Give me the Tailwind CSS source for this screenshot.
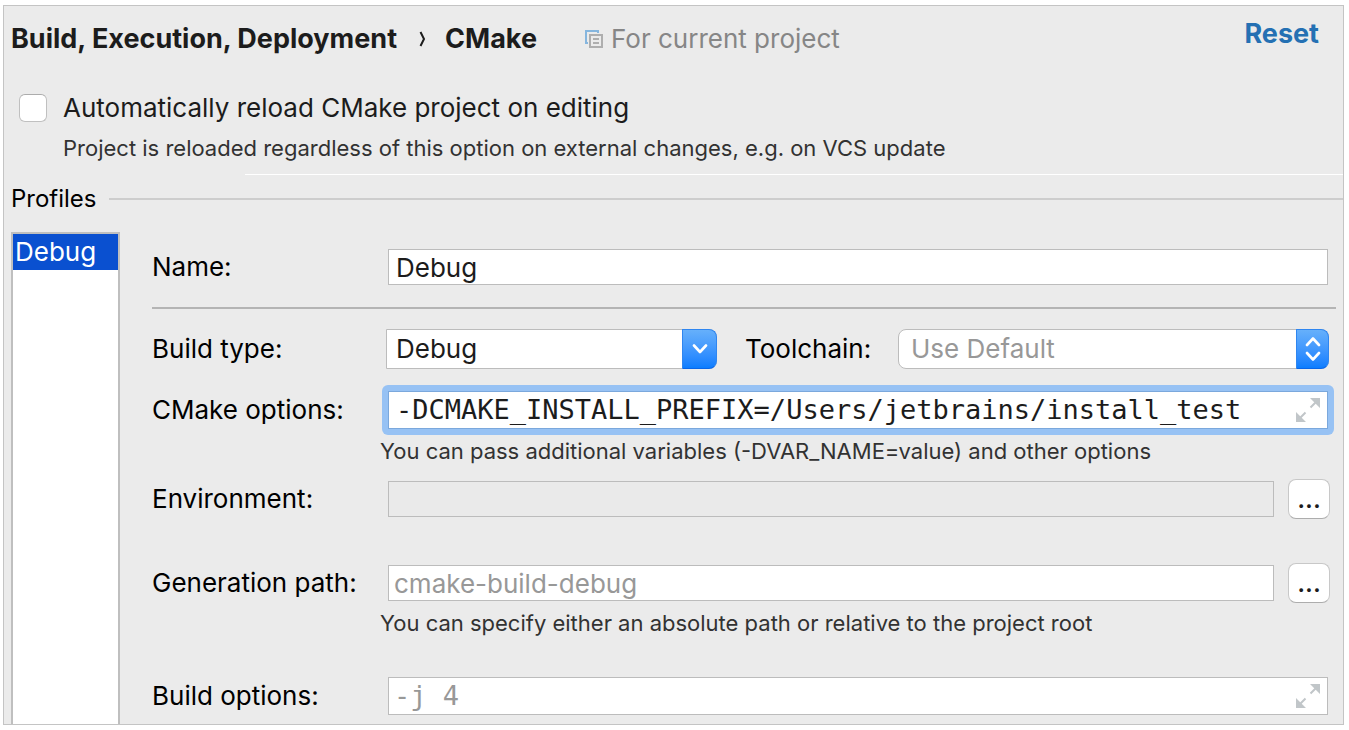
<!DOCTYPE html>
<html lang="en">
<head>
<meta charset="utf-8">
<meta name="viewport" content="width=device-width, initial-scale=1">
<title>CMake settings</title>
<script src="https://cdn.jsdelivr.net/npm/@tailwindcss/browser@4"></script>
</head>
<body class="flex min-h-screen flex-col bg-white pt-[5px] pr-[5px] pb-[5px] pl-[3px] font-['Inter','Liberation_Sans',sans-serif] text-[26px] leading-8 text-black">
<main class="flex grow flex-col border border-[#c4c4c4] bg-[#ebebeb]">

  <header class="flex items-start justify-between pt-3 pr-6 pl-[7px]">
    <div class="mt-[5px] flex items-center whitespace-nowrap text-[#1c1c1c]">
      <h1 class="flex items-center text-[27px] font-bold">
        <span>Build, Execution, Deployment</span>
        <svg class="mr-[18px] ml-[22px] h-4 w-2" viewBox="0 0 8 16" fill="none" stroke="#1c1c1c" stroke-width="2" aria-hidden="true"><path d="M1.5 1 5 8l-3.5 7"/></svg>
        <span>CMake</span>
      </h1>
      <svg class="ml-12 h-[18px] w-[18px]" viewBox="0 0 18 18" fill="none" stroke-width="2" aria-hidden="true">
        <path d="M3 13H1V1h12v2" stroke="#86b6de"/>
        <path d="M5 5h12v12H5zM8 9h6M8 13h6" stroke="#aeaeae"/>
      </svg>
      <span class="ml-2 text-[#868686]">For current project</span>
    </div>
    <a href="#" class="text-[27px] font-bold text-[#2470b3]">Reset</a>
  </header>

  <section class="mt-[37px] pl-[15px]">
    <div class="flex items-center text-[#1c1c1c]">
      <input id="reload" type="checkbox" class="h-7 w-7 appearance-none rounded-md border border-[#c0c0c0] border-t-[#acacac] bg-white">
      <label for="reload" class="ml-4">Automatically reload CMake project on editing</label>
    </div>
    <p class="mt-2 ml-11 text-[22px] text-[#323232]">Project is reloaded regardless of this option on external changes, e.g. on VCS update</p>
  </section>

  <div class="mt-[10px] ml-[241px] h-px bg-white"></div>

  <div class="mt-2 flex items-center gap-3 pl-[7px]">
    <h2 class="text-2xl leading-8">Profiles</h2>
    <div class="h-[2px] grow bg-[#cdcdcd]"></div>
  </div>

  <div class="mt-[17px] flex grow pl-[7px]">
    <ul class="w-[109px] shrink-0 border-2 border-b-0 border-[#bfbfbf] bg-white">
      <li class="h-9 bg-[#0a50d0] pl-[2px] leading-9 text-white">Debug</li>
    </ul>

    <form class="ml-8 grow pt-[17px] pr-[7px] pb-2">
      <div class="flex items-center">
        <label for="name" class="w-[236px] shrink-0">Name:</label>
        <input id="name" type="text" value="Debug" class="mr-2 h-9 min-w-0 grow border border-[#bcbcbc] bg-white px-[7px] text-[#1c1c1c] outline-none">
      </div>

      <hr class="mt-[22px] border-0 border-t-2 border-[#b4b4b4]">

      <div class="mt-5 flex items-center">
        <label for="type" class="w-[234px] shrink-0">Build type:</label>
        <div class="relative w-[331px] shrink-0">
          <select id="type" class="block h-10 w-full appearance-none rounded-r-lg border border-[#bcbcbc] bg-white pl-[9px] text-[#1c1c1c] outline-none"><option>Debug</option></select>
          <span class="pointer-events-none absolute inset-y-0 right-0 flex w-[35px] items-center justify-center rounded-r-lg border border-[#2f86f0] border-b-[#0a66e8] bg-linear-to-b from-[#66b0fb] to-[#0a7dff]">
            <svg class="h-[10px] w-4" viewBox="0 0 16 10" fill="none" stroke="#fff" stroke-width="2.6" stroke-linecap="round" stroke-linejoin="round" aria-hidden="true"><path d="m2 1.5 6 6.5 6-6.5"/></svg>
          </span>
        </div>
        <label for="toolchain" class="ml-7 w-[153px] shrink-0">Toolchain:</label>
        <div class="relative mr-[7px] grow">
          <select id="toolchain" class="block h-10 w-full appearance-none rounded-lg border border-[#bcbcbc] bg-white pl-3 text-[#989898] outline-none"><option>Use Default</option></select>
          <span class="pointer-events-none absolute inset-y-0 right-0 flex w-[33px] items-center justify-center rounded-r-lg border border-[#2f86f0] border-b-[#0a66e8] bg-linear-to-b from-[#66b0fb] to-[#0a7dff]">
            <svg class="h-6 w-4" viewBox="0 0 16 24" fill="none" stroke="#fff" stroke-width="2.6" stroke-linecap="round" stroke-linejoin="round" aria-hidden="true"><path d="m2 8 6-6.5L14 8M2 16l6 6.5 6-6.5"/></svg>
          </span>
        </div>
      </div>

      <div class="mt-4 flex items-center">
        <label for="options" class="w-[230px] shrink-0">CMake options:</label>
        <div class="mr-[2px] flex min-w-0 grow rounded-md bg-[#97c2f4] p-[6px]">
          <div class="flex h-[38px] min-w-0 grow items-center border border-[#7ba8dc] bg-white px-[7px]">
            <input id="options" type="text" value="-DCMAKE_INSTALL_PREFIX=/Users/jetbrains/install_test" class="min-w-0 grow font-['DejaVu_Sans_Mono',monospace] text-[27px] leading-8 text-[#1c1c1c] outline-none">
            <button type="button" aria-label="Expand CMake options" class="shrink-0">
              <svg class="h-6 w-6" viewBox="0 0 24 24" fill="#c1c6c9" stroke="#c1c6c9" stroke-width="2" aria-hidden="true"><path stroke="none" d="M14 0h10v10zM0 14v10h10z"/><path d="m14.500 9.500 6-6M3.500 20.500l6-6"/></svg>
            </button>
          </div>
        </div>
      </div>
      <p class="ml-[228px] text-[22px] text-[#323232]">You can pass additional variables (-DVAR_NAME=value) and other options</p>

      <div class="mt-3 flex items-center">
        <label for="env" class="w-[236px] shrink-0">Environment:</label>
        <input id="env" type="text" readonly class="h-9 min-w-0 grow border border-[#bcbcbc] bg-[#eaeaea] px-[7px] outline-none">
        <button type="button" aria-label="Edit environment" class="mr-[6px] ml-[14px] h-10 w-[42px] shrink-0 rounded-lg border border-[#c8c8c8] border-b-[#adadad] bg-white font-medium text-[#1c1c1c]">...</button>
      </div>

      <div class="mt-11 flex items-center">
        <label for="path" class="w-[236px] shrink-0">Generation path:</label>
        <input id="path" type="text" placeholder="cmake-build-debug" class="h-9 min-w-0 grow border border-[#bcbcbc] bg-white px-[5px] outline-none placeholder:text-[#989898]">
        <button type="button" aria-label="Choose generation path" class="mr-[6px] ml-[14px] h-10 w-[42px] shrink-0 rounded-lg border border-[#c8c8c8] border-b-[#adadad] bg-white font-medium text-[#1c1c1c]">...</button>
      </div>
      <p class="mt-1 ml-[228px] text-[22px] text-[#323232]">You can specify either an absolute path or relative to the project root</p>

      <div class="mt-[38px] flex items-center">
        <label for="build" class="w-[236px] shrink-0">Build options:</label>
        <div class="mr-2 flex h-[38px] min-w-0 grow items-center border border-[#bcbcbc] bg-white pr-[7px] pl-[5px]">
          <input id="build" type="text" placeholder="-j 4" class="min-w-0 grow font-['DejaVu_Sans_Mono',monospace] text-[27px] leading-8 outline-none placeholder:text-[#989898]">
          <button type="button" aria-label="Expand build options" class="shrink-0">
            <svg class="h-6 w-6" viewBox="0 0 24 24" fill="#c1c6c9" stroke="#c1c6c9" stroke-width="2" aria-hidden="true"><path stroke="none" d="M14 0h10v10zM0 14v10h10z"/><path d="m14.500 9.500 6-6M3.500 20.500l6-6"/></svg>
          </button>
        </div>
      </div>
    </form>
  </div>
</main>
</body>
</html>
